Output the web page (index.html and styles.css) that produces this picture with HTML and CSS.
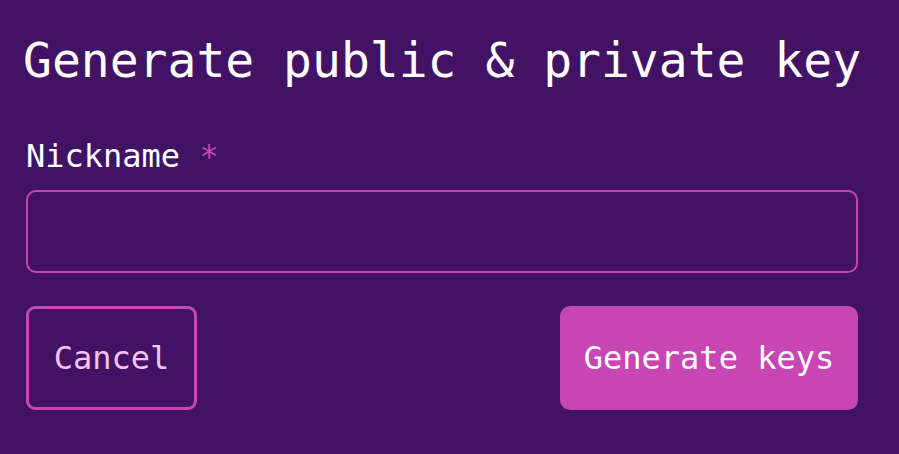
FILE: index.html
```html
<!DOCTYPE html>
<html>
<head>
<meta charset="utf-8">
<link rel="stylesheet" href="styles.css">
</head>
<body>
<main class="panel">
  <h1 class="title">Generate public &amp; private key</h1>
  <form class="form">
    <label class="label" for="nick">Nickname <span class="req">*</span></label>
    <input class="input" id="nick" type="text">
    <div class="actions">
      <button type="button" class="btn btn-cancel">Cancel</button>
      <button type="button" class="btn btn-primary">Generate keys</button>
    </div>
  </form>
</main>
</body>
</html>
```

FILE: styles.css
```css
html, body {
  margin: 0;
  padding: 0;
  background: #421265;
  height: 100%;
}
body {
  font-family: "DejaVu Sans Mono", monospace;
  color: #ffffff;
}
.panel {
  width: 832px;
  padding: 0 0 0 26px;
}
.title {
  margin: 0;
  padding-top: 30px;
  margin-left: -3px;
  font-size: 48px;
  font-weight: normal;
  line-height: 60px;
  white-space: nowrap;
}
.form {
  display: flex;
  flex-direction: column;
  margin-top: 46px;
}
.label {
  font-size: 32px;
  line-height: 40px;
}
.req {
  color: #c846b4;
}
.input {
  margin-top: 14px;
  height: 83px;
  box-sizing: border-box;
  border: 2px solid #c846b4;
  border-radius: 10px;
  background: transparent;
  font: inherit;
  color: #fff;
  outline: none;
}
.actions {
  display: flex;
  justify-content: space-between;
  margin-top: 33px;
}
.btn {
  font-family: "DejaVu Sans Mono", monospace;
  font-size: 32px;
  box-sizing: border-box;
  height: 104px;
  cursor: pointer;
}
.btn-cancel {
  width: 171px;
  border: 3px solid #c846b4;
  border-radius: 9px;
  background: transparent;
  color: #f4c2ef;
  padding: 0;
}
.btn-primary {
  width: 298px;
  border: none;
  border-radius: 10px;
  background: #c846b4;
  color: #ffffff;
  padding: 0;
}
```
